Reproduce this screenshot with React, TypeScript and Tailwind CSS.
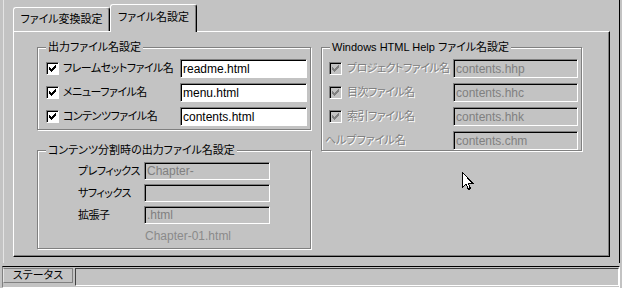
import React from 'react';

const BG = 'bg-[#c3c3c3]';

function Check({ disabled }: { disabled?: boolean }) {
  const fill = disabled ? '#808080' : '#000';
  return (
    <span
      className={`flex h-[13px] w-[13px] shrink-0 items-center justify-center border-t border-l border-t-[#808080] border-l-[#808080] border-b border-r border-b-white border-r-white shadow-[inset_1px_1px_0_#000] ${
        disabled ? BG : 'bg-white'
      }`}
    >
      <svg width="7" height="7" viewBox="0 0 7 7" shapeRendering="crispEdges">
        {[2, 3, 4, 3, 2, 1, 0].map((y, x) => (
          <rect key={x} x={x} y={y} width="1" height="3" fill={fill} />
        ))}
      </svg>
    </span>
  );
}

function Field({ value, disabled, className }: { value?: string; disabled?: boolean; className: string }) {
  return (
    <div
      className={`flex shrink-0 items-center overflow-hidden whitespace-nowrap border-t border-l border-t-[#808080] border-l-[#808080] border-b border-r border-b-white border-r-white pl-[2px] text-[12px] shadow-[inset_1px_1px_0_#000] ${
        disabled ? `${BG} text-[#808080]` : 'bg-white text-black'
      } ${className}`}
    >
      {value}
    </div>
  );
}

function Group({ title, className, children }: { title: React.ReactNode; className: string; children: React.ReactNode }) {
  return (
    <div className={`relative border border-[#808080] shadow-[1px_1px_0_#fff,inset_1px_1px_0_#fff] ${className}`}>
      <span className={`absolute -top-[8px] left-[8px] ${BG} px-[2px] text-[11px] leading-[14px] whitespace-nowrap`}>{title}</span>
      {children}
    </div>
  );
}

const dim = 'text-[#808080] [text-shadow:1px_1px_0_#fff]';

export default function App() {
  return (
    <div
      className={`flex h-[288px] w-[622px] flex-col overflow-hidden ${BG} font-['Liberation_Sans','Noto_Sans_CJK_JP',sans-serif] text-black [font-feature-settings:'palt']`}
    >
      {/* main panel */}
      <div className="ml-[3px] mr-[2px] flex h-[263px] flex-col border-l border-l-[#e4e4e4] border-r border-r-black pl-[9px] pt-[4px]">
        {/* tabs */}
        <div className="flex h-[27px] items-end">
          <div className="flex h-[24px] w-[97px] items-center justify-center rounded-t-[3px] border-t border-l border-t-white border-l-white border-r border-r-black pb-[1px] text-[11px] shadow-[inset_-1px_0_0_#808080]">
            ファイル変換設定
          </div>
          <div className={`relative z-10 -mb-px flex h-[28px] w-[87px] items-center justify-center rounded-t-[3px] border-t border-l border-t-white border-l-white border-r border-r-black ${BG} pb-[3px] text-[11px] shadow-[inset_-1px_0_0_#808080]`}>
            ファイル名設定
          </div>
        </div>

        {/* tab page */}
        <div className="relative flex h-[226px] w-[597px] border-t border-l border-t-white border-l-white border-r border-b border-r-black border-b-black pl-[23px] pt-[15px] shadow-[inset_-1px_-1px_0_#808080]">
          <div className="flex w-[274px] flex-col">
            <Group title="出力ファイル名設定" className="h-[83px] w-[274px]">
              <div className="flex flex-col gap-[5px] pl-[8px] pt-[11px]">
                {[
                  ['フレームセットファイル名', 'readme.html'],
                  ['メニューファイル名', 'menu.html'],
                  ['コンテンツファイル名', 'contents.html'],
                ].map(([label, value]) => (
                  <div key={label} className="flex h-[19px] items-center">
                    <Check />
                    <span className="ml-[4px] w-[117px] shrink-0 whitespace-nowrap text-[11px] tracking-[-0.5px]">{label}</span>
                    <Field value={value} className="h-[19px] w-[127px]" />
                  </div>
                ))}
              </div>
            </Group>

            <Group title="コンテンツ分割時の出力ファイル名設定" className="mt-[20px] h-[99px] w-[274px]">
              <div className="flex flex-col gap-[4px] pl-[40px] pt-[11px]">
                {[
                  ['プレフィックス', 'Chapter-'],
                  ['サフィックス', ''],
                  ['拡張子', '.html'],
                ].map(([label, value]) => (
                  <div key={label} className="flex h-[18px] items-center">
                    <span className="w-[66px] shrink-0 whitespace-nowrap text-[11px] tracking-[-0.5px]">{label}</span>
                    <Field value={value} disabled className="h-[18px] w-[126px]" />
                  </div>
                ))}
                <div className="flex h-[16px] items-center pl-[67px] text-[12px] text-[#8a8a8a]">Chapter-01.html</div>
              </div>
            </Group>
          </div>

          <Group
            title={
              <>
                Windows HTML Help <span className="text-[11px]">ファイル名設定</span>
              </>
            }
            className="ml-[10px] h-[104px] w-[261px]"
          >
            <div className="flex flex-col gap-[5px] pl-[3px] pt-[11px] text-[12px]">
              {[
                ['プロジェクトファイル名', 'contents.hhp'],
                ['目次ファイル名', 'contents.hhc'],
                ['索引ファイル名', 'contents.hhk'],
              ].map(([label, value]) => (
                <div key={label} className="flex h-[19px] items-center">
                  <span className="ml-[4px]">
                    <Check disabled />
                  </span>
                  <span className={`ml-[5px] w-[106px] shrink-0 whitespace-nowrap text-[11px] tracking-[-0.5px] ${dim}`}>{label}</span>
                  <Field value={value} disabled className="h-[19px] w-[125px]" />
                </div>
              ))}
              <div className="flex h-[19px] items-center">
                <span className={`w-[128px] shrink-0 whitespace-nowrap text-[11px] ${dim}`}>ヘルプファイル名</span>
                <Field value="contents.chm" disabled className="h-[19px] w-[125px]" />
              </div>
            </div>
          </Group>

          {/* mouse pointer */}
          <svg className="absolute left-[448px] top-[140px]" width="12" height="19" viewBox="0 0 12 19" shapeRendering="crispEdges">
            <path d="M0.5 0.5 L0.5 15.5 L4 12 L6.5 17.5 L8.5 16.5 L6 11 L10.5 11 Z" fill="#fff" stroke="#000" strokeWidth="1" />
          </svg>
        </div>
      </div>

      {/* status bar */}
      <div className="ml-[2px] mr-[2px] mt-[3px] flex h-[22px] gap-[2px] border-t border-t-black border-l border-l-[#808080] border-r border-b border-r-white border-b-white pt-[1px]">
        <div className="flex h-[15px] w-[70px] items-center justify-center border-t border-l border-t-[#808080] border-l-[#e4e4e4] border-r border-b border-r-[#808080] border-b-[#808080] text-[11px]">
          ステータス
        </div>
        <div className="h-[18px] flex-1 border-t border-l border-t-[#404040] border-l-[#404040] border-r border-b border-r-white border-b-white" />
      </div>
    </div>
  );
}
